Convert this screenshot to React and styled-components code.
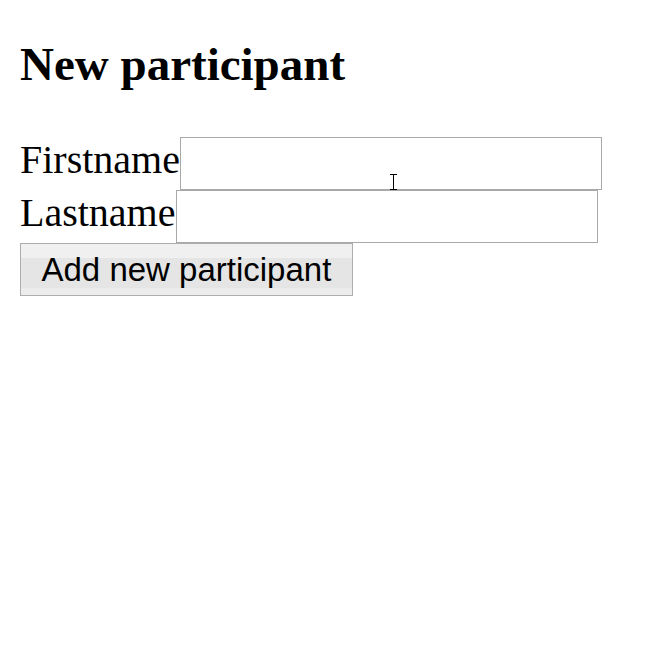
import React, { useState } from 'react';
import styled, { createGlobalStyle } from 'styled-components';

const GlobalStyle = createGlobalStyle`
body {
  margin: 0;
  background: #ffffff;
  font-family: "Liberation Serif", "Times New Roman", serif;
  color: #000;
}
`

const Page = styled.div`
position: relative;
padding: 20px;
`

const Title = styled.h1`
font-size: 47px;
font-weight: bold;
line-height: 54px;
margin: 17px 0 46px;
`

const Row = styled.div`
display: flex;
align-items: flex-start;
`

const Label = styled.label`
font-size: 40px;
line-height: 46px;
`

const Input = styled.input`
box-sizing: border-box;
width: 422px;
height: 53px;
margin: 0;
padding: 2px 4px;
border: 1px solid #a9a9a9;
border-radius: 0;
background: #fff;
font-size: 32px;
font-family: "Liberation Sans", Arial, sans-serif;
outline: none;
`

const Button = styled.button`
box-sizing: border-box;
height: 53px;
margin: 0;
padding: 0 20.5px;
border: 1px solid #adadad;
border-radius: 0;
background: linear-gradient(to bottom, #f0f0f0 0, #f0f0f0 14px, #e5e5e5 14px, #e5e5e5 44px, #ececec 44px);
font-family: "Liberation Sans", Arial, sans-serif;
font-size: 33px;
color: #000;
`

const Cursor = styled.svg`
position: absolute;
left: 389px;
top: 174px;
`

export default function App() {
	const [firstname, setFirstname] = useState('')
	const [lastname, setLastname] = useState('')
	return (<Page>
		<GlobalStyle />
		<Title>New participant</Title>
		<Row>
			<Label>Firstname</Label>
			<Input value={firstname} onChange={event => setFirstname(event.target.value)} />
		</Row>
		<Row>
			<Label>Lastname</Label>
			<Input value={lastname} onChange={event => setLastname(event.target.value)} />
		</Row>
		<Button>Add new participant</Button>
		<Cursor width="9" height="16" viewBox="0 0 9 16">
			<path d="M1 0.5h7M4.5 0.5v15M1 15.5h7" stroke="#000" strokeWidth="1" fill="none" />
		</Cursor>
	</Page>
	);
}
